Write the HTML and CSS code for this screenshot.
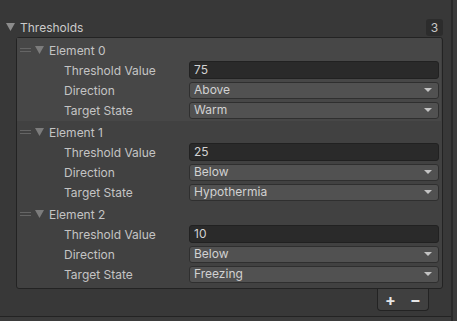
FILE: index.html
```html
<!DOCTYPE html>
<html lang="en">
<head>
    <meta charset="UTF-8">
    <meta name="viewport" content="width=device-width, initial-scale=1.0">
    <title>Thresholds</title>
    <link rel="stylesheet" href="styles.css">
</head>
<body>
    <div class="inspector">
        <div class="content">
            <div class="header">
                <svg class="fold" width="9" height="8" viewBox="0 0 9 8"><path d="M0 0H9L4.5 8Z"/></svg>
                <span class="title">Thresholds</span>
                <span class="badge">3</span>
            </div>

            <div class="list">
                <div class="element selected">
                    <div class="element-header">
                        <span class="handle"></span>
                        <svg class="fold small" width="9" height="8" viewBox="0 0 9 8"><path d="M0 0H9L4.5 8Z"/></svg>
                        <span>Element 0</span>
                    </div>
                    <div class="row">
                        <span class="label">Threshold Value</span>
                        <div class="field text">75</div>
                    </div>
                    <div class="row">
                        <span class="label">Direction</span>
                        <div class="field popup">Above<span class="arrow"></span></div>
                    </div>
                    <div class="row">
                        <span class="label">Target State</span>
                        <div class="field popup">Warm<span class="arrow"></span></div>
                    </div>
                </div>

                <div class="element">
                    <div class="element-header">
                        <span class="handle"></span>
                        <svg class="fold small" width="9" height="8" viewBox="0 0 9 8"><path d="M0 0H9L4.5 8Z"/></svg>
                        <span>Element 1</span>
                    </div>
                    <div class="row">
                        <span class="label">Threshold Value</span>
                        <div class="field text">25</div>
                    </div>
                    <div class="row">
                        <span class="label">Direction</span>
                        <div class="field popup">Below<span class="arrow"></span></div>
                    </div>
                    <div class="row">
                        <span class="label">Target State</span>
                        <div class="field popup">Hypothermia<span class="arrow"></span></div>
                    </div>
                </div>

                <div class="element">
                    <div class="element-header">
                        <span class="handle"></span>
                        <svg class="fold small" width="9" height="8" viewBox="0 0 9 8"><path d="M0 0H9L4.5 8Z"/></svg>
                        <span>Element 2</span>
                    </div>
                    <div class="row">
                        <span class="label">Threshold Value</span>
                        <div class="field text">10</div>
                    </div>
                    <div class="row">
                        <span class="label">Direction</span>
                        <div class="field popup">Below<span class="arrow"></span></div>
                    </div>
                    <div class="row">
                        <span class="label">Target State</span>
                        <div class="field popup">Freezing<span class="arrow"></span></div>
                    </div>
                </div>
            </div>

            <div class="footer">
                <div class="buttons">
                    <span class="btn">+</span>
                    <span class="btn">&minus;</span>
                </div>
            </div>

            <div class="bottom"></div>
        </div>
        <div class="scrollbar"></div>
    </div>
</body>
</html>
```

FILE: styles.css
```css
body {
    margin: 0;
    background-color: #383838;
    font-family: Inter, "Noto Sans", sans-serif;
    font-size: 12px;
    color: #c4c4c4;
    overflow: hidden;
}
.inspector {
    display: flex;
    width: 457px;
    height: 321px;
}
.content {
    flex: 1;
    display: flex;
    flex-direction: column;
}
.scrollbar {
    width: 4px;
    border-left: 2px solid #2a2a2a;
    background-color: #3b3b3b;
}
.header {
    display: flex;
    align-items: center;
    height: 18px;
    margin-top: 18px;
    padding-left: 6px;
    padding-right: 8px;
}
.fold {
    fill: #8c8c8c;
    flex: none;
}
.fold.small {
    fill: #7c7c7c;
}
.title {
    margin-left: 5px;
    color: #cbcbcb;
}
.badge {
    margin-left: auto;
    width: 17px;
    height: 17px;
    line-height: 17px;
    text-align: center;
    background-color: #2c2c2c;
    border-radius: 3px;
    color: #c8c8c8;
}
.list {
    margin: 1px 8px 0 16px;
    background-color: #414141;
    border: 1px solid #232323;
    border-radius: 3px;
    padding: 1px 1px 3px 0;
}
.element {
    height: 82px;
}
.element.selected {
    background-color: #474747;
    margin-top: -1px;
    padding-top: 1px;
    height: 82px;
}
.element-header {
    display: flex;
    align-items: center;
    height: 20px;
    padding-left: 3px;
    padding-top: 1px;
}
.handle {
    width: 11px;
    height: 4px;
    border-top: 1px solid #656565;
    border-bottom: 1px solid #656565;
    box-sizing: border-box;
    margin-right: 4px;
}
.element-header span:last-child {
    margin-left: 5px;
}
.row {
    display: flex;
    align-items: center;
    height: 20px;
}
.label {
    width: 125px;
    padding-left: 47px;
    flex: none;
}
.field {
    flex: 1;
    height: 18px;
    box-sizing: border-box;
    margin-right: 2px;
    border-radius: 3px;
    padding-left: 4px;
    line-height: 16px;
    color: #d2d2d2;
    display: flex;
    align-items: center;
}
.field.text {
    background-color: #2a2a2a;
    border: 1px solid #212121;
}
.field.popup {
    background-color: #515151;
    border: 1px solid #2f2f2f;
    height: 17px;
}
.arrow {
    margin-left: auto;
    margin-right: 6px;
    width: 0;
    height: 0;
    border-left: 4px solid transparent;
    border-right: 4px solid transparent;
    border-top: 4px solid #c4c4c4;
}
.footer {
    display: flex;
    justify-content: flex-end;
    padding-right: 22px;
}
.buttons {
    display: flex;
    align-items: center;
    justify-content: space-around;
    width: 50px;
    height: 21px;
    background-color: #404040;
    border: 1px solid #232323;
    border-top: none;
    border-radius: 0 0 4px 4px;
}
.btn {
    font-size: 16px;
    font-weight: bold;
    color: #e6e6e6;
    line-height: 16px;
}
.bottom {
    margin-top: auto;
    height: 4px;
    border-top: 1px solid #232323;
    background-color: #3b3b3b;
}
```
